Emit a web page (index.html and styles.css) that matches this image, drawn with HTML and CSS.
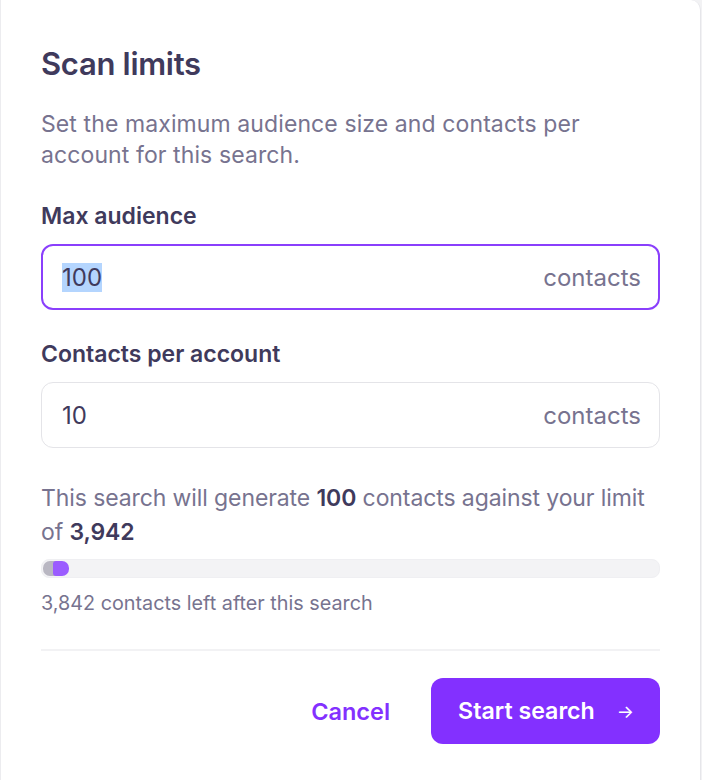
FILE: index.html
```html
<!DOCTYPE html>
<html lang="en">
<head>
    <meta charset="UTF-8">
    <meta name="viewport" content="width=device-width, initial-scale=1.0">
    <title>Scan limits</title>
    <link rel="stylesheet" href="styles.css">
</head>
<body>
    <div class="modal">
        <h1 class="modal-title">Scan limits</h1>
        <p class="modal-desc">Set the maximum audience size and contacts per account for this search.</p>

        <label class="field-label">Max audience</label>
        <div class="field field-active">
            <span class="field-value"><span class="selected">100</span></span>
            <span class="field-unit">contacts</span>
        </div>

        <label class="field-label">Contacts per account</label>
        <div class="field">
            <span class="field-value">10</span>
            <span class="field-unit">contacts</span>
        </div>

        <p class="summary">This search will generate <b>100</b> contacts against your limit of <b>3,942</b></p>

        <div class="usage-bar">
            <div class="usage-used"></div>
            <div class="usage-new"></div>
        </div>
        <p class="usage-note">3,842 contacts left after this search</p>

        <div class="modal-footer">
            <button type="button" class="btn-cancel">Cancel</button>
            <button type="button" class="btn-start"><span>Start search</span><span class="arrow">&rarr;</span></button>
        </div>
    </div>
</body>
</html>
```

FILE: styles.css
```css
/* modal */
body {
    margin: 0;
    background-color: #f2f2f4;
    font-family: Inter, "Open Sans", sans-serif;
    color: #3f3a5c;
}
.modal {
    width: 701px;
    height: 780px;
    box-sizing: border-box;
    background-color: #fff;
    padding: 46px 40px 0 41px;
    border-radius: 0 10px 0 0;
    border-right: 1px solid #e6e6ea;
    box-shadow: inset 1px 0 0 #ececef;
}
.modal-title {
    margin: 0;
    font-size: 31px;
    font-weight: 600;
    letter-spacing: -0.3px;
    line-height: 36px;
}
.modal-desc {
    margin: 27px 0 0;
    font-size: 23px;
    line-height: 31px;
    color: #77738f;
    letter-spacing: 0.1px;
}
.field-label {
    display: block;
    margin-top: 31px;
    font-size: 23px;
    font-weight: 600;
    line-height: 28px;
}
.field {
    display: flex;
    align-items: center;
    justify-content: space-between;
    height: 66px;
    box-sizing: border-box;
    margin-top: 14px;
    padding: 0 18px 0 20px;
    border: 1px solid #e4e4e8;
    border-radius: 12px;
    font-size: 24px;
}
.field-active {
    border: 2px solid #8a3ffc;
    padding: 0 17px 0 19px;
    margin-bottom: 30px;
}
.field-value {
    color: #3f3a5c;
}
.selected {
    background-color: #b4d5fe;
}
.field-unit {
    color: #77738f;
}
.field + .field-label {
    margin-top: 0;
}
.summary {
    margin: 33px 0 0;
    font-size: 23px;
    letter-spacing: -0.1px;
    line-height: 34px;
    color: #77738f;
}
.summary b {
    color: #3f3a5c;
    font-weight: 600;
}
.usage-bar {
    position: relative;
    margin-top: 10px;
    height: 19px;
    border-radius: 8px;
    background-color: #f3f3f5;
    border: 1px solid #efeff2;
    box-sizing: border-box;
}
.usage-used {
    position: absolute;
    left: 1px;
    top: 1px;
    width: 17px;
    height: 15px;
    border-radius: 7px 0 0 7px;
    background-color: #b9b7c2;
}
.usage-new {
    position: absolute;
    left: 11px;
    top: 1px;
    width: 16px;
    height: 15px;
    border-radius: 3px 7px 7px 3px;
    background-color: #9b5cff;
}
.usage-note {
    margin: 13px 0 0;
    font-size: 19.8px;
    line-height: 24px;
    color: #77738f;
}
.modal-footer {
    display: flex;
    justify-content: flex-end;
    align-items: center;
    gap: 41px;
    margin-top: 34px;
    padding-top: 27px;
    border-top: 2px solid #f2f2f4;
}
.btn-cancel {
    border: none;
    background: none;
    padding: 0;
    font-family: inherit;
    font-size: 23.5px;
    font-weight: 600;
    color: #8330ff;
    cursor: pointer;
}
.btn-start {
    display: flex;
    align-items: center;
    gap: 22px;
    height: 66px;
    padding: 0 26px 0 27px;
    border: none;
    border-radius: 12px;
    background-color: #8330ff;
    color: #fff;
    font-family: inherit;
    font-size: 23.2px;
    font-weight: 600;
    cursor: pointer;
}
.arrow {
    font-size: 18px;
    font-weight: 400;
}
```
